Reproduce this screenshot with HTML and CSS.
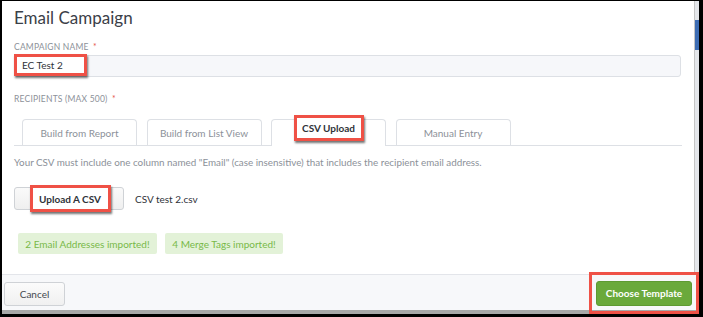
FILE: index.html
```html
<!DOCTYPE html>
<html>
<head>
<meta charset="utf-8">
<link rel="stylesheet" href="styles.css">
</head>
<body>
<div class="window">
  <div class="main">
    <div class="content">
      <h1 class="title">Email Campaign</h1>
      <div class="label">Campaign Name <span class="req">*</span></div>
      <div class="input"><span class="hl hl-input">EC Test 2</span></div>
      <div class="label label-rec">Recipients (Max 500) <span class="req">*</span></div>
      <div class="tabs">
        <div class="tab">Build from Report</div>
        <div class="tab">Build from List View</div>
        <div class="tab active"><span class="hl hl-tab">CSV Upload</span></div>
        <div class="tab">Manual Entry</div>
      </div>
      <p class="help">Your CSV must include one column named "Email" (case insensitive) that includes the recipient email address.</p>
      <div class="upload-row">
        <div class="btn btn-upload"><span class="hl hl-upload">Upload A CSV</span></div>
        <span class="filename">CSV test 2.csv</span>
      </div>
      <div class="badges">
        <span class="badge badge-1">2 Email Addresses imported!</span>
        <span class="badge badge-2">4 Merge Tags imported!</span>
      </div>
    </div>
    <div class="scrollbar"><div class="thumb"></div></div>
  </div>
  <div class="footer">
    <div class="btn btn-cancel">Cancel</div>
    <div class="hl hl-primary"><div class="btn btn-primary">Choose Template</div></div>
  </div>
  <div class="bottombar"></div>
</div>
</body>
</html>
```

FILE: styles.css
```css
html, body {
  margin: 0;
  padding: 0;
  background: #000;
  font-family: Lato, "Open Sans", sans-serif;
}
.window {
  margin: 1px 4px 0 2px;
  width: 697px;
  height: 313px;
  background: #fff;
  display: flex;
  flex-direction: column;
}
.main {
  height: 273px;
  display: flex;
  flex-shrink: 0;
}
.content {
  flex: 1;
  padding: 0 12px;
  overflow: visible;
}
.scrollbar {
  width: 4px;
  border-left: 1px solid #c4c4c4;
  background: #e4e6ea;
}
.thumb {
  margin-top: 19px;
  height: 30px;
  background: #3d6cb3;
}
.title {
  margin: 0;
  padding-top: 6px;
  font-size: 17px;
  line-height: 22px;
  font-weight: 400;
  color: #3b4048;
}
.label {
  margin-top: 13px;
  font-size: 8.5px;
  line-height: 10px;
  text-transform: uppercase;
  letter-spacing: 0.2px;
  color: #8c9199;
}
.req { color: #e6574d; margin-left: 2px; }
.label-rec { margin-top: 17px; }
.input {
  margin-top: 3px;
  box-sizing: border-box;
  height: 22px;
  width: 667px;
  border: 1px solid #dde0e5;
  border-radius: 3px;
  background: #f6f7fa;
}
.hl {
  box-sizing: border-box;
  border: 3px solid #ef5146;
  background: #fff;
  box-shadow: 1px 2px 2px rgba(0,0,0,0.55);
  display: flex;
  align-items: center;
  justify-content: center;
  color: #2f3339;
}
.hl-input {
  width: 73px;
  height: 22px;
  margin: -2px 0 0 -1px;
  justify-content: flex-start;
  padding-left: 5px;
  font-size: 10px;
}
.tabs {
  margin-top: 15px;
  display: flex;
  align-items: flex-end;
  gap: 9.5px;
  padding-left: 8px;
  border-bottom: 1px solid #dde0e5;
  width: 660px;
}
.tab {
  box-sizing: border-box;
  width: 115px;
  height: 26px;
  border: 1px solid #dde0e5;
  border-bottom: none;
  border-radius: 4px 4px 0 0;
  background: #fff;
  display: flex;
  align-items: center;
  justify-content: center;
  font-size: 10px;
  color: #8c9199;
}
.tab.active {
  margin-bottom: -1px;
  height: 27px;
  align-items: flex-start;
}
.hl-tab {
  width: 70px;
  height: 26px;
  margin-top: -5px;
  font-size: 10px;
  font-weight: 700;
}
.help {
  margin: 10px 0 0;
  font-size: 9.85px;
  line-height: 12px;
  color: #8c9199;
}
.upload-row {
  margin-top: 19px;
  display: flex;
  align-items: center;
  gap: 11px;
}
.btn {
  box-sizing: border-box;
  display: flex;
  align-items: center;
  justify-content: center;
  border-radius: 3px;
  font-size: 10px;
}
.btn-upload {
  width: 110px;
  height: 23px;
  border: 1px solid #cfd2d6;
  background: linear-gradient(#fafafa, #efefef);
}
.hl-upload {
  width: 81px;
  height: 27px;
  margin-left: 2px;
  font-weight: 700;
  font-size: 10px;
}
.filename {
  font-size: 10px;
  color: #2f3339;
}
.badges {
  margin-top: 23px;
  padding-left: 4px;
  display: flex;
  gap: 8px;
}
.badge {
  box-sizing: border-box;
  height: 21px;
  display: flex;
  align-items: center;
  justify-content: center;
  background: #e3f2d8;
  color: #78b948;
  font-size: 10px;
  border-radius: 2px;
}
.badge-1 { width: 139px; }
.badge-2 { width: 118px; }
.footer {
  box-sizing: border-box;
  height: 36px;
  flex-shrink: 0;
  border-top: 1px solid #e3e5ea;
  background: #f7f8fa;
  display: flex;
  align-items: center;
  justify-content: space-between;
  padding: 0 0 0 2px;
}
.btn-cancel {
  width: 61px;
  height: 24px;
  margin-top: 2px;
  border: 1px solid #cfd2d6;
  background: linear-gradient(#fbfbfb, #f0f0f0);
  color: #444950;
}
.hl-primary {
  width: 110px;
  height: 42px;
  background: transparent;
  box-shadow: 2px 2px 2px rgba(0,0,0,0.6);
  position: relative;
  z-index: 2;
}
.btn-primary {
  width: 96px;
  height: 25px;
  margin-top: 1px;
  background: #6aa93b;
  border: 1px solid #5e9a32;
  color: #fff;
  font-weight: 700;
}
.bottombar {
  height: 5px;
  background: #a8a8a8;
  flex-shrink: 0;
}
```
